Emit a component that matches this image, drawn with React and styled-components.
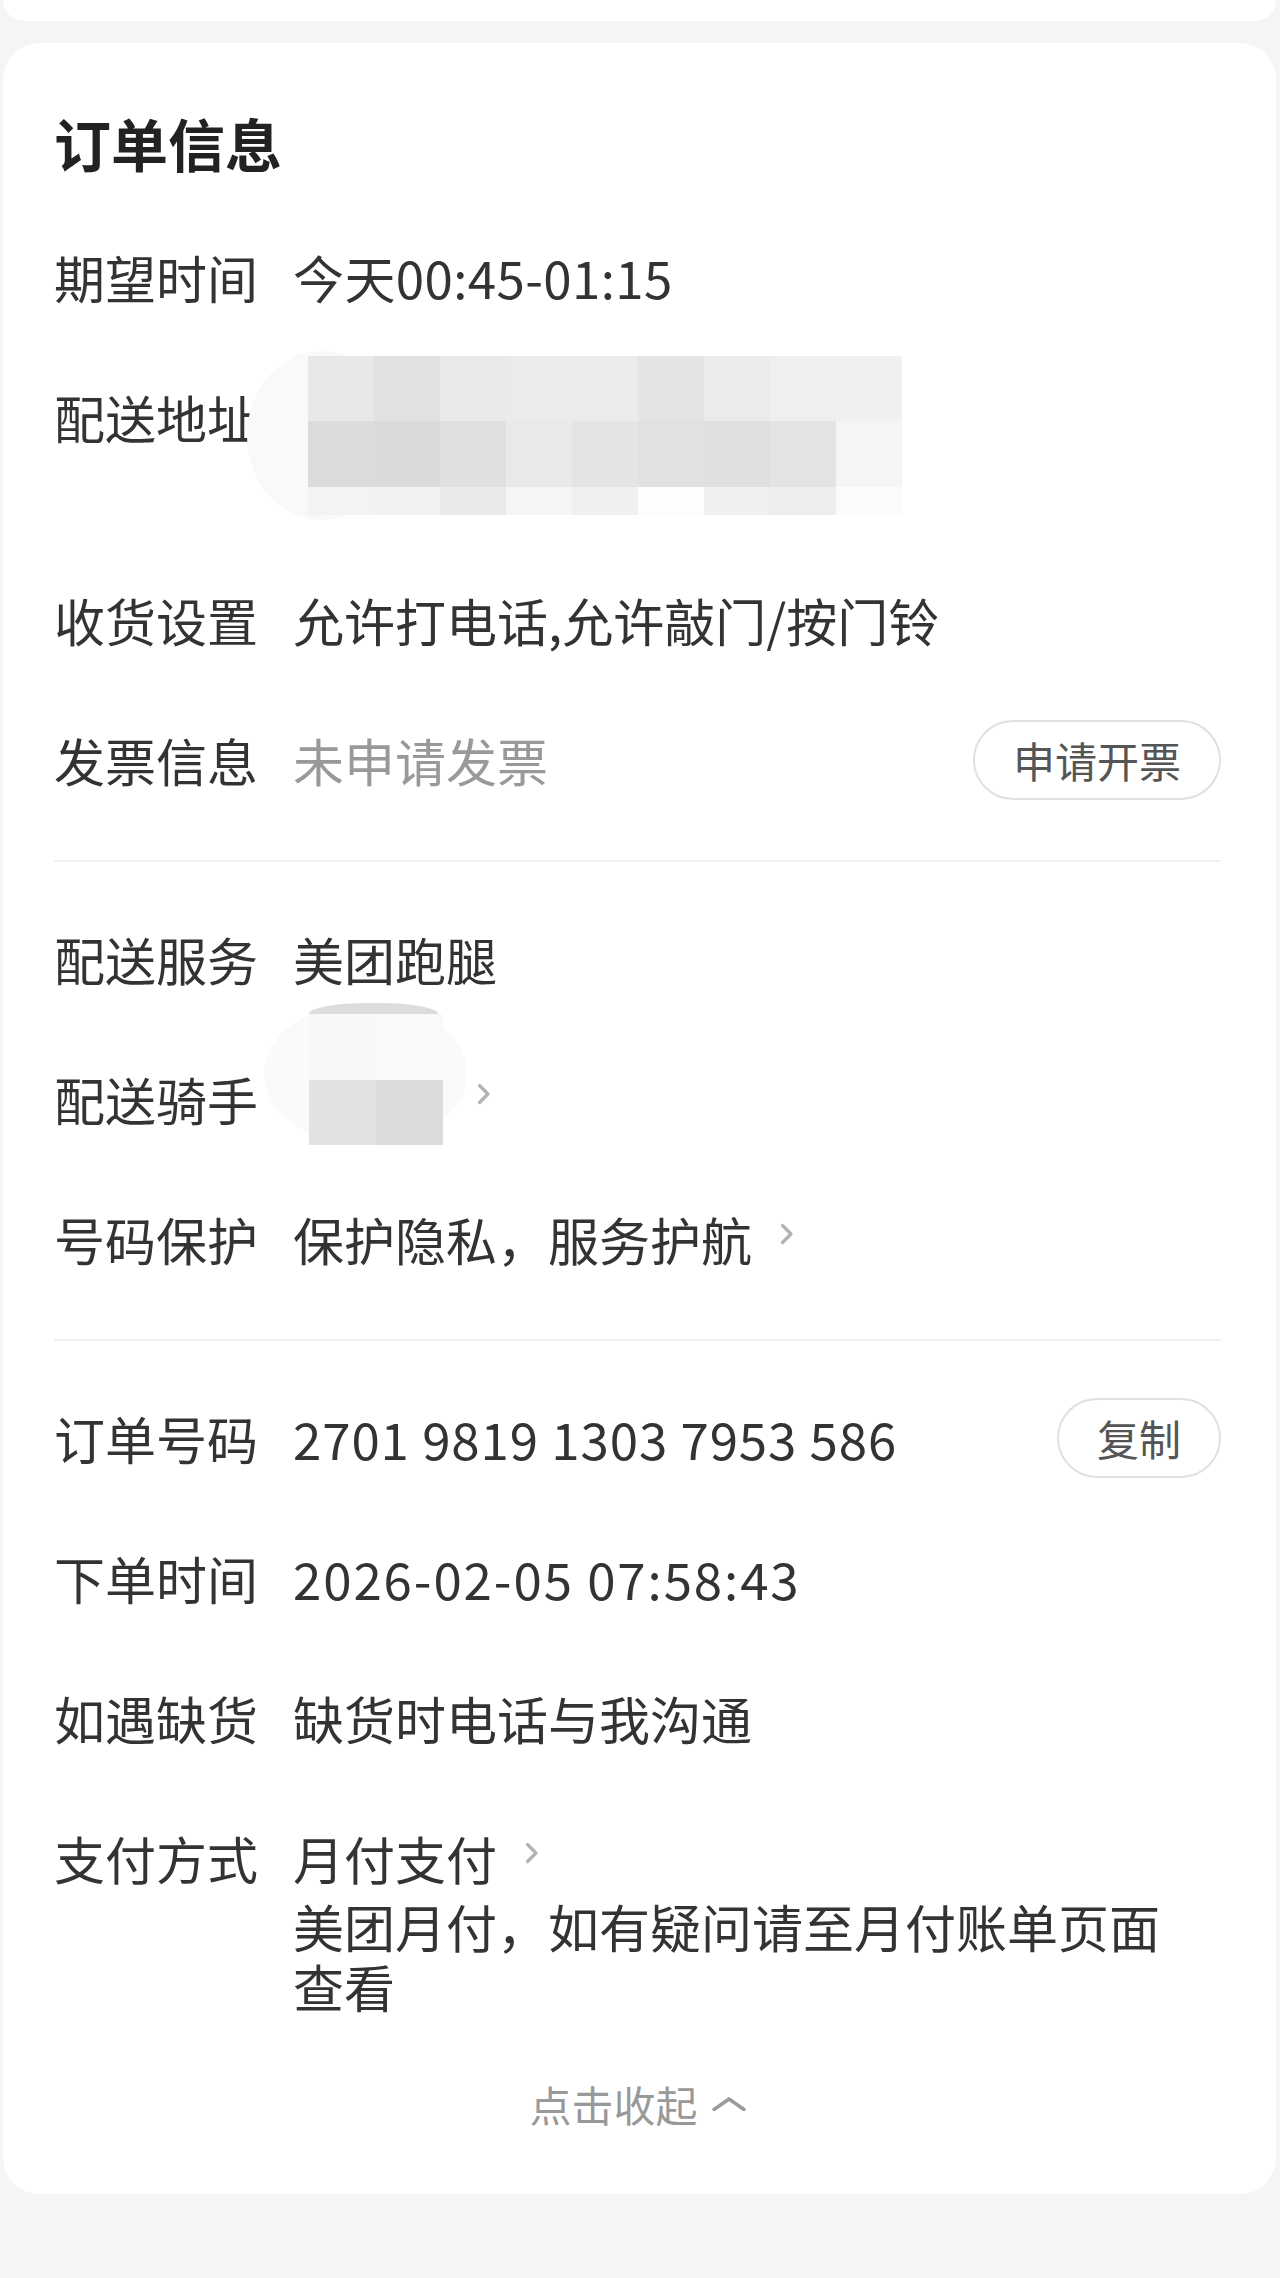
import React from "react";
import styled, { createGlobalStyle } from "styled-components";

const GlobalStyle = createGlobalStyle`
  html, body {
    margin: 0;
    padding: 0;
    background: #f5f5f5;
  }
  body {
    font-family: "Noto Sans CJK SC", "Noto Sans", sans-serif;
    color: #333;
  }
`;

const addressTiles = [
  ["#e8e8e8", "#e1e1e1", "#e9e9e9", "#ebebeb", "#ebebeb", "#e4e4e4", "#ebebeb", "#efefef", "#f0f0f0"],
  ["#dcdcdc", "#d9dad9", "#e0e0e0", "#e9e9e9", "#e4e4e4", "#e1e1e1", "#dde0de", "#e2e3e2", "#f5f5f5"],
  ["#f3f3f3", "#f1f2f1", "#eaeaea", "#f5f5f5", "#f0f0f0", "#fdfdfd", "#f0f0f0", "#eeeeee", "#fbfbfb"],
];

const riderTiles = [
  ["#f8f8f8", "#f9f9f9"],
  ["#e2e2e2", "#dcdcdc"],
];

const Chevron = () => (
  <ChevronIcon viewBox="0 0 14 22">
    <path d="M2.5 2.5 L11 11 L2.5 19.5" />
  </ChevronIcon>
);

const App = () => {
  return (
    <>
      <GlobalStyle />
      <Page>
        <TopCard />
        <Card>
          <Title>订单信息</Title>

          <Section $first>
            <Row>
              <Label>期望时间</Label>
              <Value $spacing={0.4}>今天00:45-01:15</Value>
            </Row>
            <Row>
              <Label>配送地址</Label>
              <AddressMosaic>
                {addressTiles.map((line, r) =>
                  line.map((c, i) => <Tile key={`${r}-${i}`} $c={c} />)
                )}
              </AddressMosaic>
            </Row>
            <Row>
              <Label>收货设置</Label>
              <Value>允许打电话,允许敲门/按门铃</Value>
            </Row>
            <Row $center>
              <Label>发票信息</Label>
              <Value $muted>未申请发票</Value>
              <PillButton>申请开票</PillButton>
            </Row>
          </Section>

          <Section>
            <Row>
              <Label>配送服务</Label>
              <Value>美团跑腿</Value>
            </Row>
            <Row>
              <Label>配送骑手</Label>
              <RiderMosaic>
                <Dome />
                {riderTiles.map((line, r) =>
                  line.map((c, i) => <Tile key={`${r}-${i}`} $c={c} />)
                )}
              </RiderMosaic>
              <ChevronWrap $gap={34}>
                <Chevron />
              </ChevronWrap>
            </Row>
            <Row>
              <Label>号码保护</Label>
              <Value>保护隐私，服务护航</Value>
              <ChevronWrap $gap={28}>
                <Chevron />
              </ChevronWrap>
            </Row>
          </Section>

          <Section $last>
            <Row $center>
              <Label>订单号码</Label>
              <Value $spacing={0.9}>2701 9819 1303 7953 586</Value>
              <PillButton>复制</PillButton>
            </Row>
            <Row>
              <Label>下单时间</Label>
              <Value $spacing={1.9}>2026-02-05 07:58:43</Value>
            </Row>
            <Row>
              <Label>如遇缺货</Label>
              <Value>缺货时电话与我沟通</Value>
            </Row>
            <Row>
              <Label>支付方式</Label>
              <Stack>
                <InlineLine>
                  <Value>月付支付</Value>
                  <ChevronWrap $gap={28}>
                    <Chevron />
                  </ChevronWrap>
                </InlineLine>
                <SubText>美团月付，如有疑问请至月付账单页面查看</SubText>
              </Stack>
            </Row>
          </Section>

          <Collapse>
            点击收起
            <CaretIcon viewBox="0 0 34 14">
              <path d="M2 12.5 L17 2 L32 12.5" />
            </CaretIcon>
          </Collapse>
        </Card>
      </Page>
    </>
  );
};

export default App;

const Page = styled.div`
  min-height: 2278px;
  padding: 0 4px 0 3px;
  box-sizing: border-box;
  background: #f5f5f5;
`;

const TopCard = styled.div`
  height: 21px;
  background: #fff;
  border-radius: 0 0 36px 36px;
`;

const Card = styled.div`
  margin-top: 22px;
  background: #fff;
  border-radius: 36px;
  padding: 59px 55px 60px 51px;
`;

const Title = styled.h2`
  margin: 0;
  font-size: 57px;
  line-height: 80px;
  font-weight: 700;
  color: #222;
`;

const Section = styled.div`
  padding-top: ${(p) => (p.$first ? 25 : 27)}px;
  padding-bottom: ${(p) => (p.$last ? 0 : 30)}px;
  border-bottom: ${(p) => (p.$last ? "none" : "2px solid #f0f0f0")};
`;

const Row = styled.div`
  display: flex;
  align-items: ${(p) => (p.$center ? "center" : "flex-start")};
  padding: 40px 0;
  font-size: 51px;
  line-height: 60px;
`;

const Label = styled.div`
  flex: none;
  width: 204px;
  margin-right: 35px;
  color: #333;
`;

const Value = styled.div`
  color: ${(p) => (p.$muted ? "#999" : "#333")};
  letter-spacing: ${(p) => p.$spacing || 0}px;
  white-space: nowrap;
  flex: ${(p) => (p.$muted ? "1" : "none")};
`;

const Stack = styled.div`
  display: flex;
  flex-direction: column;
  flex: 1;
  min-width: 0;
`;

const InlineLine = styled.div`
  display: flex;
  align-items: flex-start;
`;

const SubText = styled.div`
  margin-top: 8px;
  max-width: 890px;
  color: #333;
`;

const PillButton = styled.button`
  margin: -10px 0 -10px auto;
  height: 80px;
  padding: 0 38px;
  border: 2px solid #e0e0e0;
  border-radius: 40px;
  background: #fff;
  font-family: "Noto Sans CJK SC", sans-serif;
  font-size: 42px;
  line-height: 1;
  color: #555;
`;

const ChevronWrap = styled.span`
  display: flex;
  margin-left: ${(p) => p.$gap}px;
  padding-top: 14px;
`;

const ChevronIcon = styled.svg`
  width: 14px;
  height: 22px;
  fill: none;
  stroke: #b3b3b3;
  stroke-width: 3.2;
  stroke-linecap: round;
  stroke-linejoin: round;
`;

const AddressMosaic = styled.div`
  position: relative;
  isolation: isolate;
  display: grid;
  grid-template-columns: repeat(9, 66px);
  grid-template-rows: 65px 66px 28px;
  margin: -31px 0 -5px 15px;

  &::before {
    content: "";
    position: absolute;
    left: -61px;
    top: -5px;
    width: 150px;
    height: 169px;
    border-radius: 50%;
    background: #f9f9f9;
    z-index: -1;
  }
`;

const RiderMosaic = styled.div`
  position: relative;
  isolation: isolate;
  display: grid;
  grid-template-columns: repeat(2, 67px);
  grid-template-rows: 11px 66px 65px;
  margin: -66px 0 -16px 16px;

  &::before {
    content: "";
    position: absolute;
    left: -45px;
    top: 0;
    width: 203px;
    height: 142px;
    border-radius: 50%;
    background: #fafafa;
    z-index: -1;
  }
`;

const Dome = styled.div`
  grid-column: 1 / span 2;
  margin-right: 5px;
  background: #dcdcdc;
  border-radius: 60px 60px 0 0 / 11px 11px 0 0;
`;

const Tile = styled.div`
  background: ${(p) => p.$c};
`;

const Collapse = styled.div`
  margin-top: 18px;
  display: flex;
  justify-content: center;
  align-items: center;
  font-size: 42px;
  line-height: 60px;
  color: #999;
`;

const CaretIcon = styled.svg`
  width: 34px;
  height: 14px;
  margin-left: 14px;
  fill: none;
  stroke: #9a9a9a;
  stroke-width: 3.4;
  stroke-linecap: round;
  stroke-linejoin: round;
`;
